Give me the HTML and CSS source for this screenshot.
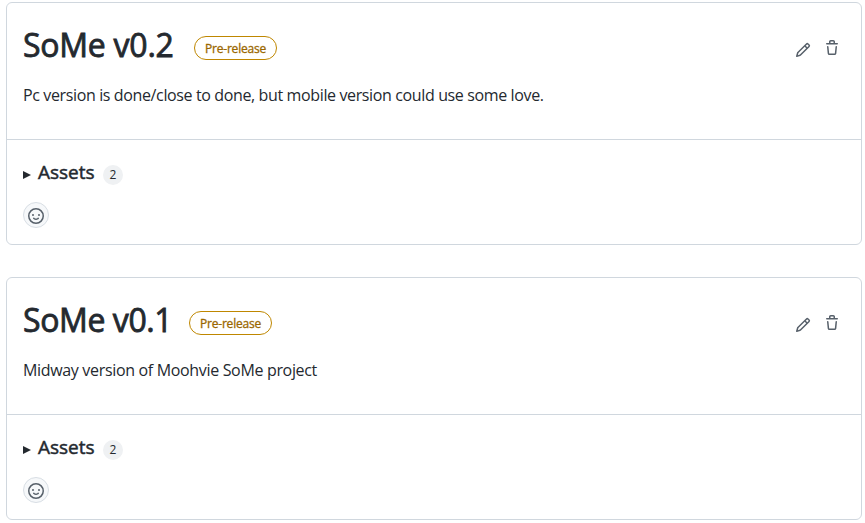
FILE: index.html
```html
<!DOCTYPE html>
<html lang="en">
<head>
<meta charset="utf-8">
<title>Releases</title>
<link rel="stylesheet" href="styles.css">
</head>
<body>
<svg class="sprite" aria-hidden="true">
  <symbol id="pencil" viewBox="0 0 16 16"><path fill-rule="evenodd" d="M11.013 1.427a1.75 1.75 0 012.474 0l1.086 1.086a1.75 1.75 0 010 2.474l-8.61 8.61c-.21.21-.47.364-.756.445l-3.251.93a.75.75 0 01-.927-.928l.929-3.25a1.75 1.75 0 01.445-.758l8.61-8.61zm1.414 1.06a.25.25 0 00-.354 0L10.811 3.75l1.439 1.44 1.263-1.263a.25.25 0 000-.354l-1.086-1.086zM11.189 6.25L9.75 4.81l-6.286 6.287a.25.25 0 00-.064.108l-.558 1.953 1.953-.558a.249.249 0 00.108-.064l6.286-6.286z"/></symbol>
  <symbol id="trash" viewBox="0 0 16 16"><path fill-rule="evenodd" d="M6.5 1.75a.25.25 0 01.25-.25h2.5a.25.25 0 01.25.25V3h-3V1.75zm4.5 0V3h2.25a.75.75 0 010 1.5H2.75a.75.75 0 010-1.5H5V1.75C5 .784 5.784 0 6.75 0h2.5C10.216 0 11 .784 11 1.75zM4.496 6.675a.75.75 0 10-1.492.15l.66 6.6A1.75 1.75 0 005.405 15h5.19c.9 0 1.652-.681 1.741-1.576l.66-6.6a.75.75 0 00-1.492-.149l-.66 6.6a.25.25 0 01-.249.225h-5.19a.25.25 0 01-.249-.225l-.66-6.6z"/></symbol>
  <symbol id="smiley" viewBox="0 0 16 16"><path fill-rule="evenodd" d="M1.5 8a6.5 6.5 0 1113 0 6.5 6.5 0 01-13 0zM8 0a8 8 0 100 16A8 8 0 008 0zM5 8a1 1 0 100-2 1 1 0 000 2zm7-1a1 1 0 11-2 0 1 1 0 012 0zM5.32 9.636a.75.75 0 011.038.175l.007.009c.103.118.22.222.35.31.264.178.683.37 1.285.37.602 0 1.02-.192 1.285-.371.13-.088.247-.192.35-.31l.007-.008a.75.75 0 111.222.87l-.614-.431c.614.43.614.431.613.431v.001l-.001.002-.002.003-.005.007-.014.019a1.984 1.984 0 01-.184.213c-.16.166-.338.316-.53.445-.63.418-1.37.638-2.127.629-.946 0-1.652-.308-2.126-.63a3.32 3.32 0 01-.715-.657l-.014-.02-.005-.006-.002-.003v-.002h-.001l.613-.432-.614.43a.75.75 0 01.183-1.044z"/></symbol>
</svg>
<main class="releases">
  <section class="card">
    <div class="body">
      <header class="head">
        <h1 class="title">SoMe v0.2</h1>
        <span class="badge">Pre-release</span>
        <div class="actions">
          <svg class="icon pencil"><use href="#pencil"/></svg>
          <svg class="icon trash"><use href="#trash"/></svg>
        </div>
      </header>
      <p class="notes">Pc version is done/close to done, but mobile version could use some love.</p>
    </div>
    <footer class="foot">
      <div class="assets"><svg class="caret" viewBox="0 0 8 8"><path d="M0 0L8 4L0 8z"/></svg><span class="label">Assets</span><span class="counter">2</span></div>
      <div class="react"><svg class="icon"><use href="#smiley"/></svg></div>
    </footer>
  </section>
  <section class="card">
    <div class="body">
      <header class="head">
        <h1 class="title narrow">SoMe v0.1</h1>
        <span class="badge">Pre-release</span>
        <div class="actions">
          <svg class="icon pencil"><use href="#pencil"/></svg>
          <svg class="icon trash"><use href="#trash"/></svg>
        </div>
      </header>
      <p class="notes short">Midway version of Moohvie SoMe project</p>
    </div>
    <footer class="foot">
      <div class="assets"><svg class="caret" viewBox="0 0 8 8"><path d="M0 0L8 4L0 8z"/></svg><span class="label">Assets</span><span class="counter">2</span></div>
      <div class="react"><svg class="icon"><use href="#smiley"/></svg></div>
    </footer>
  </section>
</main>
</body>
</html>
```
FILE: styles.css
```css
* { box-sizing: border-box; }
body {
  margin: 0;
  background: #fff;
  color: #24292f;
  font-family: "Segoe UI", "Open Sans", "Noto Sans", sans-serif;
  overflow: hidden;
}
.sprite { display: none; }
.releases {
  display: flex;
  flex-direction: column;
  gap: 32px;
  padding: 2px 3px 0 6px;
}
.card {
  height: 243px;
  border: 1px solid #d0d7de;
  border-radius: 6px;
}
.body {
  height: 137px;
  padding: 18px 16px 0;
  border-bottom: 1px solid #d0d7de;
}
.head { display: flex; height: 48px; }
.title {
  width: 171px;
  margin: 0;
  font-size: 32px;
  font-weight: 500;
  line-height: 48px;
  letter-spacing: -0.25px;
  white-space: nowrap;
  -webkit-text-stroke: 0.8px #24292f;
}
.title.narrow { width: 166px; letter-spacing: -0.4px; }
.badge {
  width: 83px;
  height: 24px;
  margin-top: 15px;
  border: 1px solid #bf8700;
  border-radius: 12px;
  color: #9a6700;
  font-size: 12px;
  font-weight: 500;
  line-height: 23px;
  text-align: center;
  letter-spacing: -0.2px;
  white-space: nowrap;
  -webkit-text-stroke: 0.3px #9a6700;
}
.actions { display: flex; margin-left: auto; gap: 13px; padding-right: 5px; }
.icon { width: 16px; height: 16px; fill: #57606a; }
.pencil { margin-top: 21px; }
.trash { margin-top: 19px; }
.notes {
  margin: 14px 0 0;
  font-size: 16px;
  line-height: 25px;
  letter-spacing: -0.37px;
  white-space: nowrap;
}
.notes.short { letter-spacing: -0.33px; }
.foot { padding: 17px 16px; }
.assets { display: flex; align-items: center; height: 30px; }
.caret { width: 8px; height: 8px; margin-top: 6px; fill: #24292f; }
.label {
  width: 58px;
  margin-left: 7px;
  font-size: 19px;
  font-weight: 500;
  line-height: 30px;
  -webkit-text-stroke: 0.5px #24292f;
}
.counter {
  width: 20px;
  height: 20px;
  margin: 5px 0 0 7px;
  border-radius: 50%;
  background: #eff1f3;
  font-size: 12px;
  line-height: 20px;
  text-align: center;
}
.react {
  display: flex;
  align-items: center;
  justify-content: center;
  width: 26px;
  height: 26px;
  margin-top: 15px;
  border: 1px solid #d8dee4;
  border-radius: 50%;
  background: #f6f8fa;
}
.react .icon { margin-top: 1px; }
```
